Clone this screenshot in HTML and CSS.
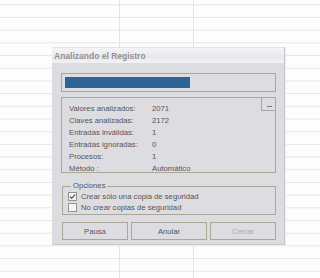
FILE: index.html
```html
<!DOCTYPE html>
<html lang="es">
<head>
    <meta charset="UTF-8">
    <title>Analizando el Registro</title>
    <link rel="stylesheet" href="styles.css">
</head>
<body>
    <div class="dialog">
        <div class="titlebar">Analizando el Registro</div>
        <div class="dialog-body">
            <div class="progress">
                <div class="progress-fill"></div>
            </div>

            <div class="stats">
                <div class="stats-toggle"><span></span></div>
                <div class="row"><span class="label">Valores analizados:</span><span>2071</span></div>
                <div class="row"><span class="label">Claves analizadas:</span><span>2172</span></div>
                <div class="row"><span class="label">Entradas inválidas:</span><span>1</span></div>
                <div class="row"><span class="label">Entradas ignoradas:</span><span>0</span></div>
                <div class="row"><span class="label">Procesos:</span><span>1</span></div>
                <div class="row"><span class="label">Método :</span><span>Automático</span></div>
            </div>

            <fieldset class="options">
                <legend>Opciones</legend>
                <div class="check-row">
                    <span class="check">
                        <svg width="7" height="7" viewBox="0 0 7 7"><path d="M1 3.6 L2.7 5.3 L6.2 1.5" fill="none" stroke="#333" stroke-width="1.1"/></svg>
                    </span>
                    Crear sólo una copia de seguridad
                </div>
                <div class="check-row">
                    <span class="check"></span>
                    No crear copias de seguridad
                </div>
            </fieldset>

            <div class="buttons">
                <button class="btn btn-small">Pausa</button>
                <button class="btn btn-wide">Anular</button>
                <button class="btn btn-small" disabled>Cerrar</button>
            </div>
        </div>
    </div>
</body>
</html>
```

FILE: styles.css
```css
* {
    margin: 0;
    padding: 0;
    box-sizing: border-box;
}

body {
    width: 320px;
    height: 278px;
    overflow: hidden;
    font-family: "Liberation Sans", Arial, sans-serif;
    font-size: 7.7px;
    color: #555558;
    background-color: #fdfdfd;
    background-image:
        linear-gradient(to right, transparent 119px, #e4e4e4 119px, #e4e4e4 120px, transparent 120px,
                        transparent 193px, #e4e4e4 193px, #e4e4e4 194px, transparent 194px),
        linear-gradient(to bottom, transparent 11.7px, #e6e6e6 11.7px);
    background-size: 100% 100%, 100% 12.7px;
    background-position: 0 0, 0 5.3px;
    padding-top: 47px;
    padding-left: 52px;
}

.dialog {
    width: 233px;
    height: 198px;
    background: #dcdce1;
    border-right: 1px solid #c8c8cc;
    border-bottom: 1px solid #c8c8cc;
    box-shadow: 1px 1px 0 #eeeeee;
}

.titlebar {
    height: 16px;
    padding: 3px 0 0 2px;
    font-size: 8.5px;
    font-weight: bold;
    color: #919194;
    background: linear-gradient(to bottom, #f4f4f8, #e8e8ee 60%, #f2f2f6);
    border-top: 1px solid #e2e2e6;
    white-space: nowrap;
}

.dialog-body {
    padding: 10px 8px 0 9px;
}

.progress {
    height: 19px;
    border: 1px solid #aaa69a;
    padding: 3px;
}

.progress-fill {
    width: 125px;
    height: 11px;
    background: #2f6398;
}

.stats {
    position: relative;
    height: 76px;
    margin-top: 5px;
    border: 1px solid #aaa69a;
    padding: 4px 0 0 7px;
}

.stats-toggle {
    position: absolute;
    top: -1px;
    right: -1px;
    width: 15px;
    height: 14px;
    border-left: 1px solid #aaa69a;
    border-bottom: 1px solid #aaa69a;
}

.stats-toggle span {
    position: absolute;
    left: 5px;
    top: 9px;
    width: 5px;
    height: 1px;
    background: #7a7a7c;
}

.row {
    display: flex;
    height: 12px;
    align-items: center;
    white-space: nowrap;
}

.label {
    width: 83px;
}

.options {
    margin-top: 9px;
    margin-left: 1px;
    height: 33px;
    border: 1px solid #aaa69a;
    padding: 1px 0 0 5px;
}

.options legend {
    margin-left: 3px;
    padding: 0 2px;
    line-height: 8px;
}

.check-row {
    display: flex;
    align-items: center;
    gap: 4px;
    height: 11px;
    white-space: nowrap;
}

.check {
    display: flex;
    align-items: center;
    justify-content: center;
    width: 9px;
    height: 9px;
    border: 1px solid #949494;
    background: #f4f4f4;
}

.buttons {
    display: flex;
    gap: 3px;
    margin-top: 7px;
    margin-left: 1px;
}

.btn {
    height: 18px;
    font-family: "Liberation Sans", Arial, sans-serif;
    font-size: 7.7px;
    color: #555558;
    background: #dcdce1;
    border: 1px solid #aaa69a;
}

.btn-small {
    width: 66px;
}

.btn-wide {
    width: 76px;
}

.btn:disabled {
    color: #ababaf;
}
```
